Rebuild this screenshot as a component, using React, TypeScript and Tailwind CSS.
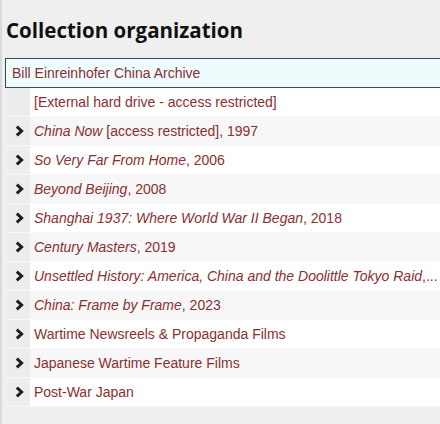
const rows: { title?: string; rest: string; expandable: boolean }[] = [
  { rest: "[External hard drive - access restricted]", expandable: false },
  { title: "China Now", rest: " [access restricted], 1997", expandable: true },
  { title: "So Very Far From Home", rest: ", 2006", expandable: true },
  { title: "Beyond Beijing", rest: ", 2008", expandable: true },
  { title: "Shanghai 1937: Where World War II Began", rest: ", 2018", expandable: true },
  { title: "Century Masters", rest: ", 2019", expandable: true },
  { title: "Unsettled History: America, China and the Doolittle Tokyo Raid", rest: ",...", expandable: true },
  { title: "China: Frame by Frame", rest: ", 2023", expandable: true },
  { rest: "Wartime Newsreels & Propaganda Films", expandable: true },
  { rest: "Japanese Wartime Feature Films", expandable: true },
  { rest: "Post-War Japan", expandable: true },
];

const Chevron = () => (
  <svg width="9" height="12" viewBox="0 0 9 12" className="text-[#15201f]">
    <path d="M1.8 1.6 L6.6 6 L1.8 10.4" fill="none" stroke="currentColor" strokeWidth="3" strokeLinejoin="miter" />
  </svg>
);

export default function App() {
  return (
    <div className="h-[424px] overflow-hidden bg-[#efefef] border-l-2 border-[#dadada] font-['Liberation_Sans',Arial,sans-serif]">
      <h2 className="pl-[4px] pt-[16px] h-[56px] text-[20.5px] font-bold text-[#111] font-['Open_Sans',sans-serif] leading-[28px]">
        Collection organization
      </h2>
      <div className="ml-[3px] mt-[2px] h-[30px] flex items-center border border-[#2d4f52] border-r-0 bg-[#effcfe] pl-[6px] text-[14px] text-[#8a2f31] whitespace-nowrap">
        Bill Einreinhofer China Archive
      </div>
      <ul className="ml-[5px]">
        {rows.map((row, i) => (
          <li key={i} className="flex h-[29px] border-b border-[#f7f7f7]">
            <div className="w-[23px] shrink-0 bg-[#ededed] flex items-center justify-center pl-[1px]">
              {row.expandable && <Chevron />}
            </div>
            <div
              className={`flex-1 min-w-0 flex items-center pl-[4px] text-[14px] text-[#8a2f31] overflow-hidden whitespace-nowrap ${
                i % 2 === 1 ? "bg-[#f7f7f7]" : "bg-white"
              }`}
            >
              <span>
                {row.title && <em>{row.title}</em>}
                {row.rest}
              </span>
            </div>
          </li>
        ))}
      </ul>
    </div>
  );
}
